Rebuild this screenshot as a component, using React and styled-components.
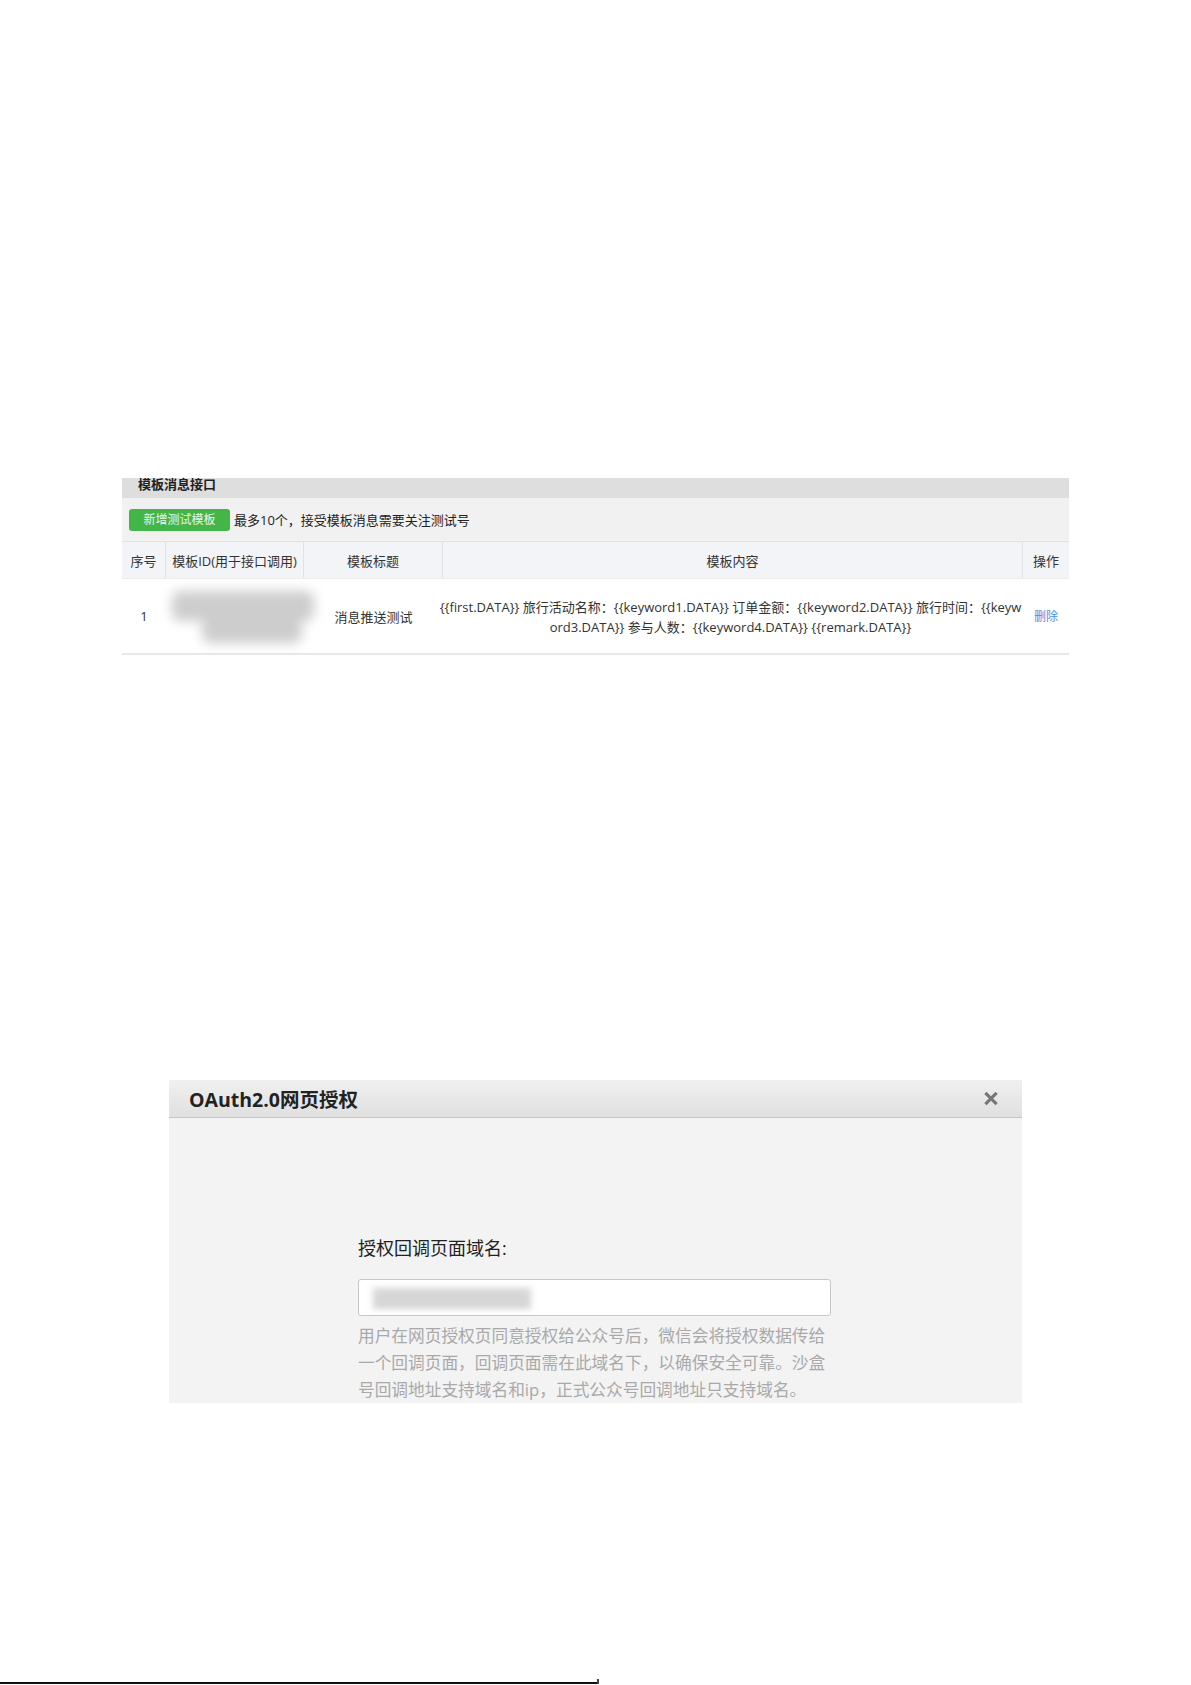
import styled, { createGlobalStyle } from "styled-components"

const Global = createGlobalStyle`
    html, body {
        margin: 0;
        padding: 0;
        background: #fff;
    }
    body {
        font-family: "Open Sans", "Noto Sans CJK SC", sans-serif;
        color: #333;
    }
`

const cols = [
    { label: "序号", width: 44 },
    { label: "模板ID(用于接口调用)", width: 138 },
    { label: "模板标题", width: 139 },
    { label: "模板内容", width: 580 },
    { label: "操作", width: 46 },
]

const gridCols = cols.map((c) => c.width + "px").join(" ")

export default function App() {
    return (
        <Page>
            <Global />
            <TableSection>
                <SectionBar>模板消息接口</SectionBar>
                <ActionRow>
                    <GreenButton>新增测试模板</GreenButton>
                    <Hint>最多10个，接受模板消息需要关注测试号</Hint>
                </ActionRow>
                <HeadRow>
                    {cols.map((c, i) => (
                        <HeadCell key={c.label} $last={i === cols.length - 1}>
                            {c.label}
                        </HeadCell>
                    ))}
                </HeadRow>
                <BodyRow>
                    <Cell>1</Cell>
                    <Cell>
                        <BlurBox>
                            <BlurLine $w={142} $l={0} />
                            <BlurLine $w={100} $l={30} />
                        </BlurBox>
                    </Cell>
                    <Cell>消息推送测试</Cell>
                    <ContentCell>
                        {"{{first.DATA}} 旅行活动名称：{{keyword1.DATA}} 订单金额：{{keyword2.DATA}} 旅行时间：{{keyw"}
                        <br />
                        {"ord3.DATA}} 参与人数：{{keyword4.DATA}} {{remark.DATA}}"}
                    </ContentCell>
                    <Cell>
                        <DeleteLink>删除</DeleteLink>
                    </Cell>
                </BodyRow>
            </TableSection>

            <Dialog>
                <DialogHeader>
                    <DialogTitle>OAuth2.0网页授权</DialogTitle>
                    <CloseIcon viewBox="0 0 16 16">
                        <path d="M2 2 L14 14 M14 2 L2 14" />
                    </CloseIcon>
                </DialogHeader>
                <DialogBody>
                    <Form>
                        <FieldLabel>授权回调页面域名:</FieldLabel>
                        <InputBox>
                            <InputBlur />
                        </InputBox>
                        <HelpText>
                            用户在网页授权页同意授权给公众号后，微信会将授权数据传给
                            <br />
                            一个回调页面，回调页面需在此域名下，以确保安全可靠。沙盒
                            <br />
                            号回调地址支持域名和ip，正式公众号回调地址只支持域名。
                        </HelpText>
                    </Form>
                </DialogBody>
            </Dialog>

            <FootRule>
                <RuleMark />
            </FootRule>
        </Page>
    )
}

const Page = styled.div`
    width: 1191px;
    height: 1685px;
    padding-top: 478px;
    box-sizing: border-box;
    display: flex;
    flex-direction: column;
    overflow: hidden;
`

const TableSection = styled.div`
    margin-left: 122px;
    width: 947px;
    font-size: 13px;
`

const SectionBar = styled.div`
    height: 20px;
    background: #dedede;
    padding-left: 16px;
    font-weight: 700;
    font-size: 13px;
    line-height: 13px;
    color: #222;
`

const ActionRow = styled.div`
    height: 43px;
    background: #f1f1f1;
    display: flex;
    align-items: center;
    padding-left: 7px;
    gap: 4px;
`

const GreenButton = styled.div`
    width: 101px;
    height: 22px;
    margin-top: 1px;
    background: #44b549;
    border-radius: 3px;
    color: #e8f6e8;
    font-size: 12px;
    line-height: 22px;
    text-align: center;
`

const Hint = styled.span`
    font-size: 13px;
    color: #222;
`

const HeadRow = styled.div`
    display: grid;
    grid-template-columns: ${gridCols};
    height: 37px;
    background: #f3f4f7;
    border-top: 1px solid #e2e2e2;
    box-sizing: border-box;
`

const HeadCell = styled.div`
    display: flex;
    align-items: center;
    justify-content: center;
    border-right: ${(p) => (p.$last ? "none" : "1px solid #e2e2e2")};
    color: #333;
    font-size: 13px;
`

const BodyRow = styled.div`
    display: grid;
    grid-template-columns: ${gridCols};
    height: 77px;
    background: #fff;
    border-bottom: 2px solid #e8e8e8;
    box-sizing: border-box;
    border-top: 1px solid #ececec;
`

const Cell = styled.div`
    display: flex;
    align-items: center;
    justify-content: center;
    font-size: 13px;
    color: #333;
    position: relative;
`

const ContentCell = styled.div`
    display: flex;
    flex-direction: column;
    justify-content: center;
    align-items: center;
    text-align: center;
    white-space: nowrap;
    font-size: 13px;
    line-height: 20px;
    color: #333;
    margin-left: -5px;
    padding-top: 1px;
`

const BlurBox = styled.div`
    position: absolute;
    left: 2px;
    top: 6px;
    width: 150px;
    height: 66px;
    filter: blur(6px);
`

const BlurLine = styled.div`
    position: absolute;
    left: ${(p) => p.$l + 4}px;
    top: ${(p) => (p.$l ? 34 : 6)}px;
    width: ${(p) => p.$w}px;
    height: ${(p) => (p.$l ? 24 : 30)}px;
    background: #cdcdcd;
    border-radius: 8px;
`

const DeleteLink = styled.span`
    color: #4d90e0;
    font-size: 12px;
`

const Dialog = styled.div`
    margin-top: 425px;
    margin-left: 169px;
    width: 853px;
`

const DialogHeader = styled.div`
    height: 37px;
    background: linear-gradient(#f0f0f0, #e0e0e0);
    border-bottom: 1px solid #c6c6c6;
    display: flex;
    align-items: center;
    justify-content: space-between;
    padding: 0 23px 0 20px;
`

const DialogTitle = styled.div`
    font-size: 19.5px;
    font-weight: 700;
    color: #222;
`

const CloseIcon = styled.svg`
    width: 16px;
    height: 15px;
    fill: none;
    stroke: #777;
    stroke-width: 3.4;
    stroke-linecap: butt;
`

const DialogBody = styled.div`
    height: 285px;
    background: #f3f3f3;
    overflow: hidden;
    padding-left: 189px;
`

const Form = styled.div`
    width: 473px;
    padding-top: 118px;
`

const FieldLabel = styled.div`
    font-size: 18px;
    line-height: 24px;
    color: #222;
`

const InputBox = styled.div`
    margin-top: 19px;
    height: 37px;
    box-sizing: border-box;
    border: 1px solid #c8c8c8;
    border-radius: 3px;
    background: #fff;
    position: relative;
`

const InputBlur = styled.div`
    position: absolute;
    left: 14px;
    top: 8px;
    width: 158px;
    height: 21px;
    background: #d6d6d6;
    filter: blur(3px);
`

const HelpText = styled.div`
    margin-top: 6px;
    font-size: 16.7px;
    line-height: 27px;
    color: #a9a9a9;
    white-space: nowrap;
`

const FootRule = styled.div`
    margin-top: auto;
    margin-bottom: 1px;
    width: 597px;
    height: 2px;
    background: #111;
    position: relative;
`

const RuleMark = styled.div`
    position: absolute;
    right: -2px;
    top: -3px;
    width: 2px;
    height: 5px;
    background: #444;
`
